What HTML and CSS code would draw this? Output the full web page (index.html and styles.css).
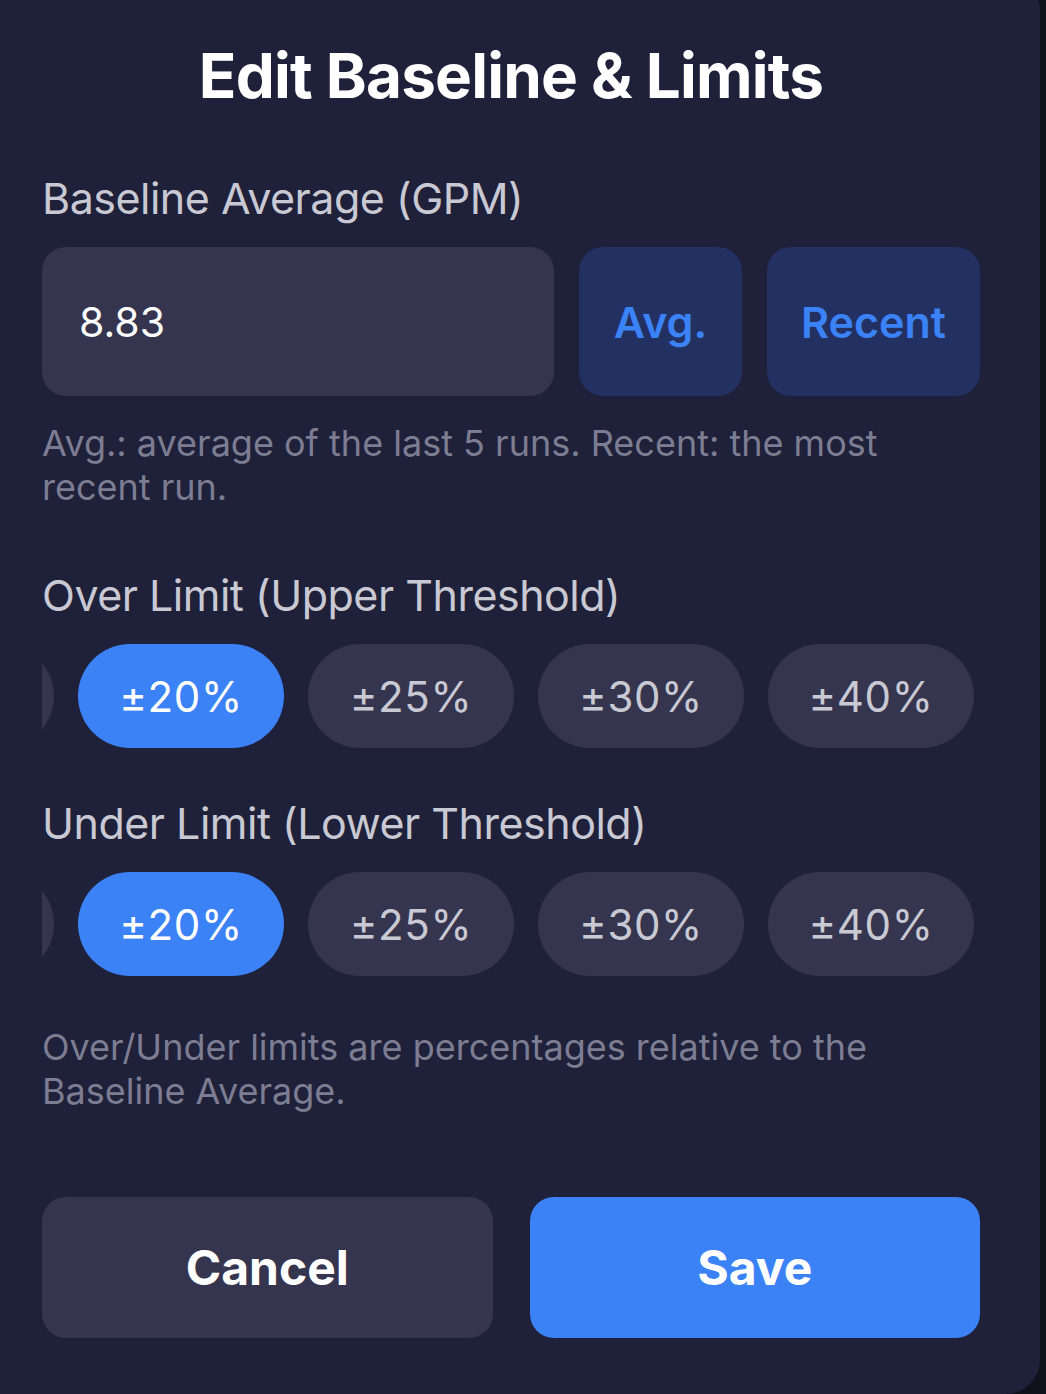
FILE: index.html
```html
<!DOCTYPE html>
<html lang="en">
<head>
<meta charset="utf-8">
<title>Edit Baseline &amp; Limits</title>
<link rel="stylesheet" href="styles.css">
</head>
<body>
<div class="sheet">
  <h1 class="title">Edit Baseline &amp; Limits</h1>

  <div class="label first">Baseline Average (GPM)</div>
  <div class="input-row">
    <div class="input">8.83</div>
    <button class="fill-btn avg">Avg.</button>
    <button class="fill-btn recent">Recent</button>
  </div>
  <p class="hint">Avg.: average of the last 5 runs. Recent: the most recent run.</p>

  <div class="label over">Over Limit (Upper Threshold)</div>
  <div class="chips">
    <div class="track">
      <span class="chip">±15%</span>
      <span class="chip active">±20%</span>
      <span class="chip">±25%</span>
      <span class="chip">±30%</span>
      <span class="chip">±40%</span>
    </div>
  </div>

  <div class="label under">Under Limit (Lower Threshold)</div>
  <div class="chips">
    <div class="track">
      <span class="chip">±15%</span>
      <span class="chip active">±20%</span>
      <span class="chip">±25%</span>
      <span class="chip">±30%</span>
      <span class="chip">±40%</span>
    </div>
  </div>

  <p class="hint footer-hint">Over/Under limits are percentages relative to the Baseline Average.</p>

  <div class="actions">
    <button class="action cancel">Cancel</button>
    <button class="action save">Save</button>
  </div>
</div>
</body>
</html>
```

FILE: styles.css
```css
* { box-sizing: border-box; }

html, body {
  margin: 0;
  padding: 0;
  height: 100%;
  overflow: hidden;
  background: #0f1019;
}

body {
  font-family: Inter, "Noto Sans", "Liberation Sans", sans-serif;
}

.sheet {
  width: 1040px;
  height: 1418px;
  margin-top: -24px;
  padding: 60px 60px 0 42px;
  background: #1f2039;
  border-radius: 0 34px 34px 0;
}

.title {
  margin: 0;
  height: 80px;
  line-height: 80px;
  text-align: center;
  font-size: 62px;
  font-weight: 700;
  color: #ffffff;
  letter-spacing: -0.8px;
}

.label {
  height: 56px;
  line-height: 56px;
  font-size: 43px;
  font-weight: 400;
  color: #c9c9d3;
  letter-spacing: -0.5px;
}
.label.first { margin-top: 54px; }
.label.over { margin-top: 58px; }
.label.under { margin-top: 47px; }

.input-row {
  display: flex;
  gap: 25px;
  margin-top: 21px;
  height: 149px;
}

.input {
  flex: 1;
  background: #35354f;
  border-radius: 24px;
  padding-left: 37px;
  display: flex;
  align-items: center;
  color: #ffffff;
  font-size: 41px;
}

.fill-btn {
  border: none;
  background: #233162;
  border-radius: 24px;
  color: #3b82f6;
  font-family: inherit;
  font-size: 43px;
  font-weight: 600;
  padding: 0;
}
.fill-btn.avg { width: 163px; }
.fill-btn.recent { width: 213px; }

.hint {
  margin: 25px 0 0;
  font-size: 36px;
  line-height: 44px;
  color: #7c7d92;
  letter-spacing: 0;
  max-width: 900px;
}

.footer-hint {
  margin-top: 49px;
}

.chips {
  margin-top: 21px;
  height: 104px;
  overflow: hidden;
}

.track {
  display: flex;
  gap: 24px;
  margin-left: -194px;
}

.chip {
  flex: 0 0 206px;
  height: 104px;
  border-radius: 52px;
  background: #35354f;
  color: #c9c9d3;
  display: flex;
  align-items: center;
  justify-content: center;
  font-size: 42px;
  letter-spacing: 0.6px;
}
.chip.active {
  background: #3b82f6;
  color: #ffffff;
}

.actions {
  display: flex;
  gap: 37px;
  margin-top: 84px;
}

.action {
  flex: 1;
  height: 141px;
  border: none;
  border-radius: 24px;
  font-family: inherit;
  font-size: 48px;
  font-weight: 700;
  color: #ffffff;
}
.action.cancel { background: #35354f; }
.action.save { background: #3b82f6; }
```
